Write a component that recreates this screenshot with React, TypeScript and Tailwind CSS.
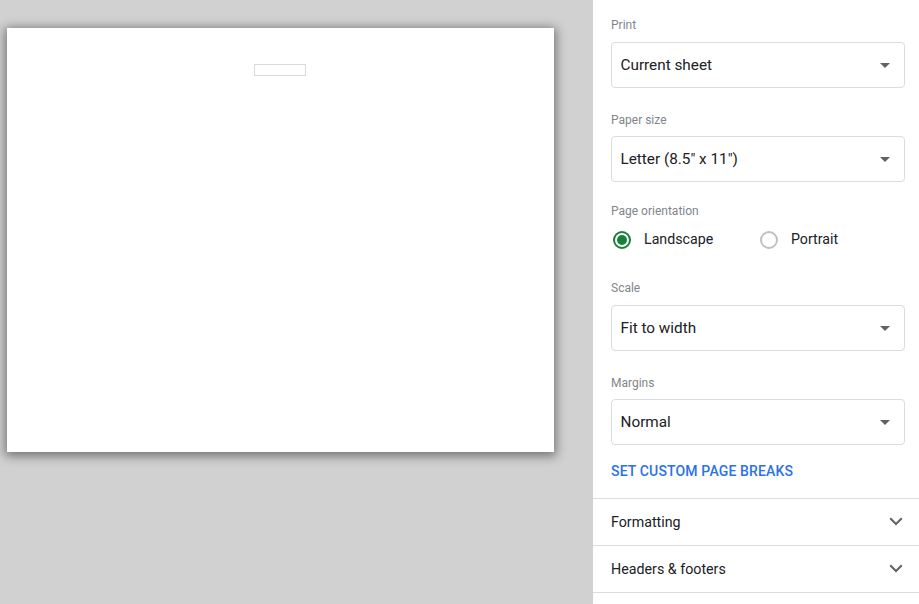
const font = { fontFamily: "Roboto, sans-serif" }

function Field({ label, value, labelClass }: { label: string; value: string; labelClass: string }) {
  return (
    <div>
      <p className={`text-[12px] leading-[16px] text-[#80868b] ${labelClass}`}>{label}</p>
      <div className="flex h-[46px] w-[294px] items-center justify-between rounded-[4px] border border-[#dadce0] pl-[8.5px] pr-[14px]">
        <span className="text-[15.3px] text-[#202124]">{value}</span>
        <svg width="10" height="5" viewBox="0 0 10 5">
          <path d="M0 0h10L5 5z" fill="#5f6368" />
        </svg>
      </div>
    </div>
  )
}

function Section({ title }: { title: string }) {
  return (
    <div className="flex h-[47px] items-center justify-between border-b border-[#dadce0] pl-[18px] pr-[16px] pt-[2px]">
      <span className="text-[14.25px] text-[#202124]">{title}</span>
      <svg width="14" height="9" viewBox="0 0 14 9" className="mb-[3px] mr-[4.5px]">
        <path d="M1.2 1.2 7 7l5.8-5.8" fill="none" stroke="#5f6368" strokeWidth="2" />
      </svg>
    </div>
  )
}

export default function App() {
  return (
    <div className="flex h-[604px] w-[919px] overflow-hidden bg-white" style={font}>
      {/* preview */}
      <div className="h-full w-[593px] shrink-0 bg-[#d1d1d1] pl-[7px] pt-[28px]">
        <div className="flex h-[424px] w-[547px] justify-center bg-white pt-[36px] shadow-[0_2px_10px_2px_rgba(0,0,0,0.45)]">
          <div className="mr-[1px] h-[12px] w-[52px] border border-[#d9d9d9]" />
        </div>
      </div>

      {/* settings */}
      <div className="flex-1">
        <div className="px-[18px] pt-[17px]">
          <Field label="Print" value="Current sheet" labelClass="mb-[9px]" />
          <div className="mt-[24px]">
            <Field label="Paper size" value="Letter (8.5&quot; x 11&quot;)" labelClass="mb-[8px]" />
          </div>

          <p className="mt-[21px] text-[12px] leading-[16px] text-[#80868b]">Page orientation</p>
          <div className="mt-[11px] flex h-[20px] items-center">
            <span className="ml-[2px] flex h-[18px] w-[18px] items-center justify-center rounded-full border-2 border-[#188038]">
              <span className="h-[10px] w-[10px] rounded-full bg-[#188038]" />
            </span>
            <span className="mb-[1px] ml-[13px] w-[116px] text-[14.2px] text-[#202124]">Landscape</span>
            <span className="h-[18px] w-[18px] rounded-full border-2 border-[#bdc1c6]" />
            <span className="mb-[1px] ml-[13px] text-[14.2px] text-[#202124]">Portrait</span>
          </div>

          <div className="mt-[30px]">
            <Field label="Scale" value="Fit to width" labelClass="mb-[9px]" />
          </div>
          <div className="mt-[24px]">
            <Field label="Margins" value="Normal" labelClass="mb-[8px]" />
          </div>

          <p className="mt-[18px] text-[14px] font-medium leading-[16px] tracking-[0.15px] text-[#2b71e8]">SET CUSTOM PAGE BREAKS</p>
        </div>

        <div className="mt-[19px] border-t border-[#dadce0]">
          <Section title="Formatting" />
          <Section title="Headers & footers" />
        </div>
      </div>
    </div>
  )
}
